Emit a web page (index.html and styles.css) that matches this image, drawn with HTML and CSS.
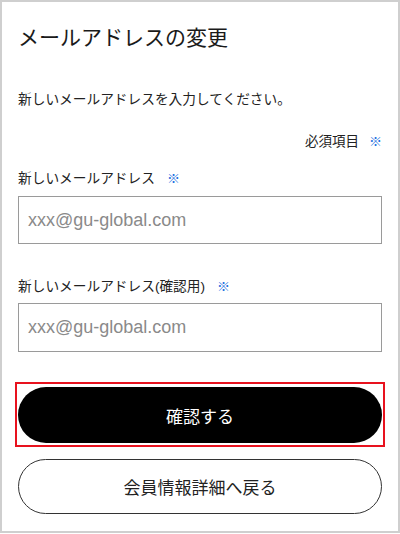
FILE: index.html
```html
<!DOCTYPE html>
<html lang="ja">
<head>
<meta charset="utf-8">
<link rel="stylesheet" href="styles.css">
</head>
<body>
<div class="page">
  <h1 class="title">メールアドレスの変更</h1>
  <p class="desc">新しいメールアドレスを入力してください。</p>
  <p class="required">必須項目<span class="mark">※</span></p>
  <label class="label label-first">新しいメールアドレス<span class="mark">※</span></label>
  <div class="input"><span class="placeholder">xxx@gu-global.com</span></div>
  <label class="label label-second">新しいメールアドレス(確認用)<span class="mark">※</span></label>
  <div class="input input-second"><span class="placeholder">xxx@gu-global.com</span></div>
  <div class="focus-ring"><button class="btn btn-primary">確認する</button></div>
  <button class="btn btn-secondary">会員情報詳細へ戻る</button>
</div>
</body>
</html>
```
FILE: styles.css
```css
html, body {
  margin: 0;
  padding: 0;
  background: #fff;
}
.page {
  box-sizing: border-box;
  width: 400px;
  height: 533px;
  border: 2px solid #cfcfcf;
  padding: 0 16px;
  font-family: "Liberation Sans", "Noto Sans CJK JP", sans-serif;
  color: #222;
  display: flex;
  flex-direction: column;
}
.title {
  margin: 21px 0 0;
  font-size: 21px;
  line-height: 30px;
  font-weight: 400;
  color: #1a1a1a;
}
.desc {
  margin: 37px 0 0;
  font-size: 13.7px;
  line-height: 20px;
  color: #222;
}
.required {
  margin: 22px 0 0;
  text-align: right;
  font-size: 13.5px;
  line-height: 20px;
  padding-right: 0;
}
.mark {
  color: #1b6fe0;
  margin-left: 10px;
  font-size: 13px;
}
.label {
  display: block;
  font-size: 13.7px;
  line-height: 20px;
  color: #222;
}
.label .mark {
  margin-left: 12px;
}
.label-first {
  margin-top: 17px;
}
.label-second {
  margin-top: 33px;
}
.input {
  box-sizing: border-box;
  margin-top: 7px;
  height: 48px;
  border: 1.5px solid #9a9a9a;
  display: flex;
  align-items: center;
  padding-left: 9px;
}
.input-second {
  margin-top: 6px;
  height: 49px;
}
.placeholder {
  font-family: "Liberation Sans", Arial, sans-serif;
  font-size: 18px;
  color: #8a8a8a;
}
.focus-ring {
  margin: 30px -3px 0;
  border: 2px solid #e8121e;
  padding: 3px 1px 2px;
}
.btn {
  box-sizing: border-box;
  display: flex;
  align-items: center;
  justify-content: center;
  width: 100%;
  border-radius: 28px;
  font-family: "Liberation Sans", "Noto Sans CJK JP", sans-serif;
  font-size: 17px;
  margin: 0;
  padding: 0;
}
.btn-primary {
  height: 56px;
  background: #000;
  color: #fff;
  border: none;
}
.btn-secondary {
  margin-top: 12px;
  height: 55px;
  background: #fff;
  color: #222;
  border: 1.5px solid #333;
}
```
